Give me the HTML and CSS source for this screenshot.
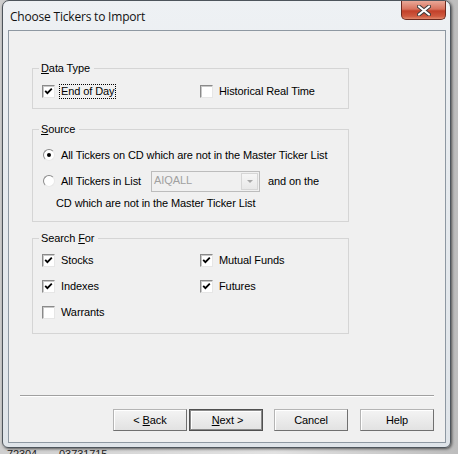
FILE: index.html
```html
<!DOCTYPE html>
<html lang="en">
<head>
    <meta charset="UTF-8">
    <title>Choose Tickers to Import</title>
    <link rel="stylesheet" href="styles.css">
</head>
<body>

    <div class="window">
        <div class="titlebar">
            <span class="title">Choose Tickers to Import</span>
            <div class="close-btn">
                <svg width="14" height="11" viewBox="0 0 14 11">
                    <path d="M2 1.5 L12 9.5 M12 1.5 L2 9.5" stroke="#3a3a3a" stroke-width="4" stroke-linecap="round"/>
                    <path d="M2 1.5 L12 9.5 M12 1.5 L2 9.5" stroke="#ffffff" stroke-width="2.2" stroke-linecap="round"/>
                </svg>
            </div>
        </div>

        <div class="client">
            <fieldset class="group group-type">
                <legend><u>D</u>ata Type</legend>
                <div class="grid grid-type">
                    <label class="option">
                        <span class="check checked"><svg width="9" height="9" viewBox="0 0 9 9"><path d="M1.2 3.8 L3.4 6.2 L7.8 1.6" stroke="#000" stroke-width="1.8" fill="none"/></svg></span>
                        <span class="focus">End of Day</span>
                    </label>
                    <label class="option">
                        <span class="check"></span>
                        <span>Historical Real Time</span>
                    </label>
                </div>
            </fieldset>

            <fieldset class="group group-source">
                <legend><u>S</u>ource</legend>
                <label class="row option">
                    <span class="radio selected"></span>
                    <span>All Tickers on CD which are not in the Master Ticker List</span>
                </label>
                <label class="row option">
                    <span class="radio"></span>
                    <span>All Tickers in List</span>
                    <span class="combo">
                        <span class="combo-text">AIQALL</span>
                        <span class="combo-arrow"></span>
                    </span>
                    <span>and on the</span>
                </label>
                <div class="row-tail">CD which are not in the Master Ticker List</div>
            </fieldset>

            <fieldset class="group group-search">
                <legend>Search <u>F</u>or</legend>
                <div class="grid">
                    <label class="option">
                        <span class="check checked"><svg width="9" height="9" viewBox="0 0 9 9"><path d="M1.2 3.8 L3.4 6.2 L7.8 1.6" stroke="#000" stroke-width="1.8" fill="none"/></svg></span>
                        <span>Stocks</span>
                    </label>
                    <label class="option">
                        <span class="check checked"><svg width="9" height="9" viewBox="0 0 9 9"><path d="M1.2 3.8 L3.4 6.2 L7.8 1.6" stroke="#000" stroke-width="1.8" fill="none"/></svg></span>
                        <span>Mutual Funds</span>
                    </label>
                    <label class="option">
                        <span class="check checked"><svg width="9" height="9" viewBox="0 0 9 9"><path d="M1.2 3.8 L3.4 6.2 L7.8 1.6" stroke="#000" stroke-width="1.8" fill="none"/></svg></span>
                        <span>Indexes</span>
                    </label>
                    <label class="option">
                        <span class="check checked"><svg width="9" height="9" viewBox="0 0 9 9"><path d="M1.2 3.8 L3.4 6.2 L7.8 1.6" stroke="#000" stroke-width="1.8" fill="none"/></svg></span>
                        <span>Futures</span>
                    </label>
                    <label class="option">
                        <span class="check"></span>
                        <span>Warrants</span>
                    </label>
                </div>
            </fieldset>

            <div class="separator"></div>

            <div class="buttons">
                <button class="btn btn-back">&lt; <u>B</u>ack</button>
                <button class="btn btn-default">&nbsp;<u>N</u>ext &gt;</button>
                <button class="btn btn-cancel">Cancel</button>
                <button class="btn btn-help">Help</button>
            </div>
        </div>
    </div>

    <div class="desktop-text">
        <span>72304</span>
        <span>03731715</span>
    </div>

</body>
</html>
```

FILE: styles.css
```css
html, body {
    margin: 0;
    padding: 0;
    height: 454px;
    overflow: hidden;
}
body {
    background: linear-gradient(90deg, #cfcfcf 0%, #e2e2e2 60%, #bdbdbd 100%);
    font-family: 'Liberation Sans', Arial, sans-serif;
    font-size: 11px;
    letter-spacing: -0.1px;
    color: #000;
}
.window {
    width: 449px;
    height: 448px;
    margin-left: 2px;
    box-sizing: border-box;
    border: 1px solid #4e555c;
    border-radius: 7px 7px 6px 6px;
    background: linear-gradient(180deg, #eef1f4 0%, #e6eaee 40%, #dfe4e9 100%);
    box-shadow: 1px 1px 3px rgba(0, 0, 0, 0.6);
    display: flex;
    flex-direction: column;
}
.titlebar {
    height: 29px;
    display: flex;
    align-items: flex-start;
}
.title {
    font-family: 'Open Sans', 'Noto Sans', sans-serif;
    font-size: 12px;
    color: #111;
    margin: 7px 0 0 7px;
    letter-spacing: -0.2px;
}
.close-btn {
    margin: 0 4px 0 auto;
    width: 45px;
    height: 19px;
    box-sizing: border-box;
    border: 1px solid #6b2a20;
    border-top: none;
    border-radius: 0 0 5px 5px;
    background: linear-gradient(180deg, #e9a898 0%, #d8735e 45%, #c2402a 55%, #cf5a40 85%, #e28a6e 100%);
    display: flex;
    align-items: center;
    justify-content: center;
}
.client {
    flex: 1;
    margin: 0 4px 4px 5px;
    border: 1px solid #8e98a2;
    background-color: #f0f0f0;
    display: flex;
    flex-direction: column;
}
.group {
    margin: 0 0 0 23px;
    width: 317px;
    box-sizing: border-box;
    border: 1px solid #d5d5d5;
    border-radius: 0;
    padding: 6px 9px 7px 9px;
    min-width: 0;
}
.group legend {
    padding: 0 4px 0 2px;
    margin-left: -3px;
    line-height: 14px;
}
.group-type {
    margin-top: 30px;
}
.group-source {
    margin-top: 13px;
    padding-bottom: 9px;
}
.group-search {
    margin-top: 9px;
    padding-top: 2px;
    padding-bottom: 8px;
}
.row {
    display: flex;
    align-items: center;
    height: 26px;
}
.option {
    display: flex;
    align-items: center;
    gap: 6px;
}
.grid {
    display: grid;
    grid-template-columns: 158px 1fr;
    grid-auto-rows: 26px;
    align-items: center;
}
.grid-type {
    grid-auto-rows: 20px;
}
.check {
    width: 13px;
    height: 13px;
    box-sizing: border-box;
    flex: none;
    border: 1px solid;
    border-color: #8a8a8a #e6e6e6 #e6e6e6 #8a8a8a;
    box-shadow: inset 1px 1px 0 #c8c8c8;
    background-color: #fff;
    display: flex;
    align-items: center;
    justify-content: center;
}
.focus {
    outline: 1px dotted #000;
    outline-offset: 0;
    padding: 0 1px;
    margin-left: -1px;
    line-height: 13px;
}
.radio {
    width: 12px;
    height: 12px;
    box-sizing: border-box;
    flex: none;
    border-radius: 50%;
    border: 1px solid;
    border-color: #8a8a8a #e8e8e8 #e8e8e8 #8a8a8a;
    background-color: #fff;
    display: flex;
    align-items: center;
    justify-content: center;
    margin-left: 1px;
}
.radio.selected::after {
    content: "";
    width: 4px;
    height: 4px;
    border-radius: 50%;
    background-color: #000;
}
.combo {
    width: 109px;
    height: 21px;
    box-sizing: border-box;
    border: 1px solid #bcbcbc;
    background-color: #f0f0f0;
    display: flex;
    align-items: stretch;
    margin: 0 2px 0 4px;
}
.combo-text {
    flex: 1;
    color: #a0a0a0;
    padding-left: 2px;
    line-height: 17px;
}
.combo-arrow {
    width: 15px;
    margin: 1px;
    border: 1px solid #d6d6d6;
    background: linear-gradient(180deg, #f6f6f6, #e8e8e8);
    display: flex;
    align-items: center;
    justify-content: center;
}
.combo-arrow::after {
    content: "";
    border-left: 3px solid transparent;
    border-right: 3px solid transparent;
    border-top: 3px solid #a8a8a8;
}
.row-tail {
    height: 18px;
    line-height: 18px;
    padding-left: 14px;
}
.separator {
    margin: 61px 11px 0 11px;
    border-top: 1px solid #a0a0a0;
    border-bottom: 1px solid #fff;
}
.buttons {
    display: flex;
    justify-content: flex-end;
    margin-top: 12px;
    padding-right: 11px;
}
.btn {
    width: 74px;
    height: 22px;
    box-sizing: border-box;
    font-family: 'Liberation Sans', Arial, sans-serif;
    font-size: 11px;
    letter-spacing: -0.1px;
    color: #000;
    border: 1px solid #888;
    border-color: #b4b4b4 #707070 #707070 #b4b4b4;
    background: linear-gradient(180deg, #f4f4f4 0%, #ebebeb 50%, #e2e2e2 100%);
    box-shadow: inset 1px 1px 0 #fff;
    padding: 0;
}
.btn-default {
    margin-left: 2px;
    border: 1px solid #505050;
    box-shadow: inset 0 0 0 1px #8a8a8a, inset 2px 2px 0 #fff;
}
.btn-cancel {
    margin-left: 11px;
}
.btn-help {
    margin-left: 12px;
}
.desktop-text {
    display: flex;
    gap: 22px;
    padding-left: 7px;
    font-size: 11px;
    line-height: 11px;
    color: #222;
    margin-top: 1px;
}
```
